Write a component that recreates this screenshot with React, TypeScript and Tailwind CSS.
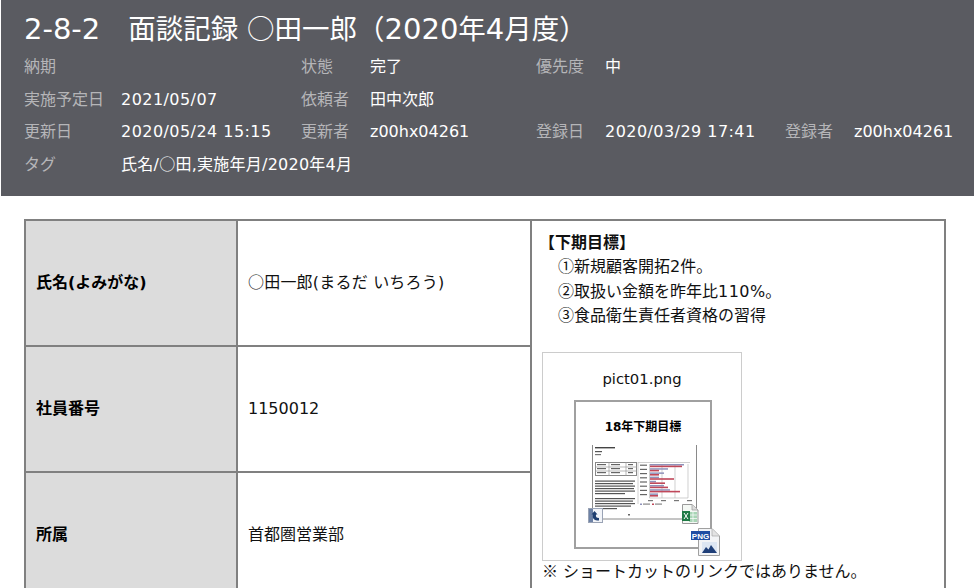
import React from "react";

const font = { fontFamily: '"DejaVu Sans","Noto Sans CJK JP",sans-serif' };

function J({ children }: { children?: React.ReactNode }) {
  return <span className="font-['Noto_Sans_CJK_JP',sans-serif] leading-[0]">{children}</span>;
}

function Label({ children }: { children?: React.ReactNode }) {
  return <div className="text-[#b5b5b8] whitespace-nowrap">{children}</div>;
}
function Value({ children }: { children?: React.ReactNode }) {
  return <div className="text-white whitespace-nowrap">{children}</div>;
}
function Num({ children }: { children?: React.ReactNode }) {
  return <span className="tracking-[0.45px]">{children}</span>;
}

function Thumb() {
  const bars: [number, number][] = [
    [34, 32], [18, 9], [14, 9], [9, 24], [6, 15], [14, 18], [20, 30], [8, 8],
  ];
  const para = [40, 38, 40, 39, 40, 30, 0, 40, 38, 40, 36, 22];
  return (
    <svg className="absolute -left-[2px] -top-[2px] overflow-visible" width="150" height="160" viewBox="0 0 150 160">
      {/* document */}
      <path d="M18.5 45V119H122.5V45" fill="none" stroke="#8a8a8a" strokeWidth="1" />
      <rect x="21" y="47" width="20" height="1.4" fill="#444" />
      <rect x="21" y="51" width="7" height="1.2" fill="#555" />
      <rect x="21" y="54" width="6" height="1.2" fill="#777" />
      <rect x="21.5" y="62.5" width="41" height="13" fill="none" stroke="#888" strokeWidth="1" />
      <path d="M21 67H63M21 71H63M35 62V76M52 62V76" stroke="#999" strokeWidth="0.7" />
      {[23, 37, 54].map((x) =>
        [64, 68, 72].map((y) => <rect key={`${x}-${y}`} x={x} y={y} width={x === 54 ? 5 : 9} height="1.2" fill="#666" />)
      )}
      {para.map((w, i) => (
        <rect key={i} x="21" y={80.5 + i * 2.5} width={w} height="1.2" fill="#555" />
      ))}
      {/* chart */}
      <path d="M64 62.5H116M64 62V104" stroke="#c4c4c4" strokeWidth="0.8" fill="none" />
      <path d="M75.5 64V98H114M88 64V98M101 64V98M114 64V98" stroke="#bcbcbc" strokeWidth="0.7" fill="none" />
      {bars.map(([a, b], i) => (
        <g key={i}>
          <rect x="66" y={64.6 + i * 4.2} width="7" height="1.2" fill="#666" />
          <rect x="76" y={64 + i * 4.2} width={a} height="1.5" fill="#8f93bb" />
          <rect x="76" y={65.6 + i * 4.2} width={b} height="1.6" fill="#c0485a" />
        </g>
      ))}
      {[74, 87, 100, 113].map((x) => (
        <rect key={x} x={x} y="100" width="5" height="1.2" fill="#777" />
      ))}
      <rect x="66" y="103.5" width="2" height="1.5" fill="#8f93bb" />
      <rect x="69" y="103.5" width="7" height="1.2" fill="#888" />
      <rect x="78" y="103.5" width="2" height="1.5" fill="#c0485a" />
      <rect x="81" y="103.5" width="7" height="1.2" fill="#888" />
      <rect x="54" y="114" width="2" height="1.5" fill="#666" />

      {/* shortcut badge */}
      <rect x="14.5" y="108.5" width="14" height="14" fill="#f2f4f8" stroke="#9aa3b5" />
      <rect x="15" y="109" width="4" height="13" fill="#6d82a6" />
      <path d="M25 120.500c-5 0-7-2-6-6l-1.500 0 3-3.500 3 3.500-1.500 0c-.5 2.500.5 3.500 3 3.500z" fill="#1f3f70" />

      {/* excel */}
      <path d="M108.5 104.5H118L124 110V123.5H108.5Z" fill="#f4f8f4" stroke="#9a9a9a" />
      <path d="M118 105V110H124" fill="#ddd" stroke="#9a9a9a" strokeWidth="0.7" />
      <rect x="115" y="112" width="8" height="10" fill="#a8d5b5" />
      <path d="M115 115H123M115 118.500H123M119 112V122" stroke="#ffffff" strokeWidth="0.7" />
      <rect x="108" y="111" width="8" height="10" fill="#1f7a45" />
      <path d="M110 113L114 119M114 113L110 119" stroke="#fff" strokeWidth="1" />

      {/* png */}
      <path d="M124.500 128.500H138L145.500 136V155.500H124.500Z" fill="#f3f4f6" stroke="#a0a0a0" />
      <path d="M138 129V136H145" fill="#e3e3e3" stroke="#a8a8a8" strokeWidth="0.7" />
      <rect x="117" y="131" width="19" height="9" fill="#1f4ea3" />
      <text x="126.500" y="138.500" textAnchor="middle" fill="#fff" fontSize="8" fontWeight="700" style={{ fontFamily: '"Liberation Sans",sans-serif' }}>PNG</text>
      <rect x="128" y="142" width="15" height="11" fill="#dde6f2" />
      <path d="M128 153L132 147L134.500 149.500L137 145L143 153Z" fill="#1f3f78" />
    </svg>
  );
}

const labelCell = "border-2 border-[#808080] bg-[#dcdcdc] pl-[10px] font-bold text-[16px] text-black align-middle";
const valueCell = "border-2 border-[#808080] bg-white pl-[10px] text-[#111] align-middle";
const goalLine = "h-[24.300px] pl-[16px]";

export default function App() {
  return (
    <div className="w-[974px] h-[588px] overflow-hidden bg-white text-[16px]" style={font}>
      <header className="ml-px h-[196px] bg-[#5a5b61] pl-[23px] pt-[9px]">
        <h1 className="h-[40px] text-[27.500px] leading-[40px] text-white font-normal whitespace-nowrap">
          <span className="text-[29px]">2-8-2</span>
          <span className="ml-[28px]">面談記録 <J>○</J>田一郎（<span className="text-[29px]">2020</span>年<span className="text-[29px]">4</span>月度）</span>
        </h1>
        <div className="mt-[2px] grid grid-cols-[97px_180px_69px_166px_69px_180px_69px_1fr] auto-rows-[32.500px] items-center">
          <Label>納期</Label><Value />
          <Label>状態</Label><Value>完了</Value>
          <Label>優先度</Label><Value>中</Value>
          <div /><div />
          <Label>実施予定日</Label><Value><Num>2021/05/07</Num></Value>
          <Label>依頼者</Label><Value>田中次郎</Value>
          <div /><div /><div /><div />
          <Label>更新日</Label><Value><Num>2020/05/24 15:15</Num></Value>
          <Label>更新者</Label><Value>z00hx04261</Value>
          <Label>登録日</Label><Value><Num>2020/03/29 17:41</Num></Value>
          <Label>登録者</Label><Value>z00hx04261</Value>
          <Label>タグ</Label><Value><span className="tracking-[0.25px]">氏名/<J>○</J>田,実施年月/2020年4月</span></Value>
        </div>
      </header>

      <table className="ml-6 mt-[23px] w-[922px] table-fixed border-collapse">
        <colgroup>
          <col className="w-[212px]" />
          <col className="w-[294px]" />
          <col />
        </colgroup>
        <tbody>
          <tr className="h-[126px]">
            <th className={`${labelCell} text-left`}>氏名(よみがな)</th>
            <td className={valueCell}><span className="tracking-[0.2px]"><J>○</J>田一郎(まるだ いちろう)</span></td>
            <td rowSpan={3} className="border-2 border-[#808080] bg-white align-top pl-[10px] text-[#111] text-[16px]">
              <div className="pt-[10px] leading-[24.300px]">
                <div className="h-[24.300px] font-bold -ml-[3px]">【下期目標】</div>
                <div className={goalLine}><J>①</J>新規顧客開拓2件。</div>
                <div className={goalLine}><J>②</J>取扱い金額を昨年比<Num>110</Num>%。</div>
                <div className={goalLine}><J>③</J>食品衛生責任者資格の習得</div>
              </div>
              <div className="mt-[24px] h-[209px] w-[200px] border border-[#cccccc] pt-[14px]">
                <div className="text-center leading-[24px] text-[#111] text-[14.800px]">pict01.png</div>
                <div className="relative ml-[31px] mt-[9px] h-[149px] w-[138px] border-2 border-[#a0a0a0]">
                  <div className="absolute left-0 right-0 top-[15px] text-center text-[12px] leading-[20px] font-bold text-black">18年下期目標</div>
                  <Thumb />
                </div>
              </div>
              <div className="h-[22px] whitespace-nowrap text-[16px] leading-[22px]"><J>※</J> ショートカットのリンクではありません。</div>
            </td>
          </tr>
          <tr className="h-[126px]">
            <th className={`${labelCell} text-left`}>社員番号</th>
            <td className={valueCell}>1150012</td>
          </tr>
          <tr className="h-[126px]">
            <th className={`${labelCell} text-left`}>所属</th>
            <td className={valueCell}>首都圏営業部</td>
          </tr>
        </tbody>
      </table>
    </div>
  );
}
